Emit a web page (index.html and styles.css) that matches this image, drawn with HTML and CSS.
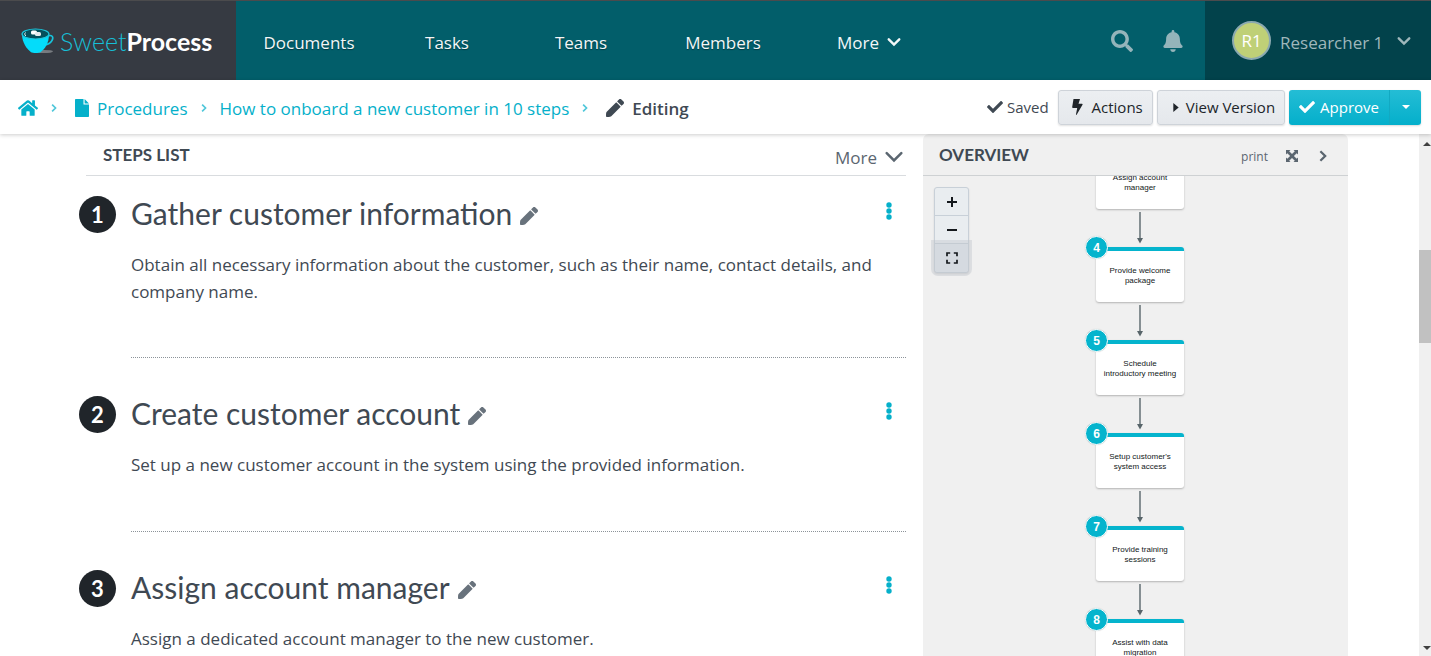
FILE: index.html
```html
<!DOCTYPE html>
<html lang="en">
<head>
<meta charset="utf-8">
<meta name="viewport" content="width=device-width, initial-scale=1">
<title>How to onboard a new customer in 10 steps - SweetProcess</title>
<link rel="stylesheet" href="styles.css">
</head>
<body>
<svg class="sprite" aria-hidden="true">
  <symbol id="pencil" viewBox="0 0 512 512"><path d="M497.9 142.1l-46.1 46.1c-4.7 4.7-12.3 4.7-17 0l-111-111c-4.7-4.7-4.7-12.3 0-17l46.1-46.1c18.7-18.7 49.1-18.7 67.9 0l60.1 60.1c18.8 18.7 18.8 49.1 0 67.9zM284.2 99.8L21.6 362.4C6 378 .4 400 .4 483.9c-2.900 16.400 11.400 30.600 27.800 27.800 84 0 106-5 121.500-21.300l262.600-262.600c4.700-4.700 4.700-12.300 0-17l-111-111c-4.800-4.700-12.400-4.700-17.100 0z"/></symbol>
  <symbol id="check" viewBox="0 0 512 512"><path d="M173.898 439.404l-166.400-166.400c-9.997-9.997-9.997-26.206 0-36.204l36.203-36.204c9.997-9.998 26.207-9.998 36.204 0L192 312.690 432.095 72.596c9.997-9.997 26.207-9.997 36.204 0l36.203 36.204c9.997 9.997 9.997 26.206 0 36.204l-294.400 294.401c-9.998 9.997-26.207 9.997-36.204-.001z"/></symbol>
  <symbol id="down" viewBox="0 0 16 16"><path d="M2 5 8 11 14 5" fill="none" stroke="currentColor" stroke-width="2.800" stroke-linecap="round"/></symbol>
  <symbol id="chevron" viewBox="0 0 16 16"><path d="M1.500 4.500 8 11 14.500 4.500" fill="none" stroke="currentColor" stroke-width="2.200" stroke-linecap="round"/></symbol>
  <symbol id="right" viewBox="0 0 16 16"><path d="M5 2.500 10.500 8 5 13.500" fill="none" stroke="currentColor" stroke-width="2.600"/></symbol>
  <symbol id="dots" viewBox="0 0 6 18"><circle cx="3" cy="3" r="2.700"/><circle cx="3" cy="9" r="2.700"/><circle cx="3" cy="15" r="2.700"/></symbol>
  <symbol id="arrow" viewBox="0 0 8 32"><path d="M4 0V28" stroke="currentColor" stroke-width="1.400"/><path d="M1 26H7L4 31.500Z"/></symbol>
</svg>

<header class="topbar">
  <a class="brand" href="#">
    <svg class="cup" viewBox="0 0 34 26" aria-hidden="true">
      <ellipse cx="23" cy="23.500" rx="9" ry="1.600" fill="#777b80"/>
      <path d="M26 8.500c5-2.500 7 .5 5 4-1.500 2.700-4.500 4-7.500 4.500" fill="none" stroke="#17c3dc" stroke-width="1.600"/>
      <path d="M1 6c0 9 5 15 9 18.200 1.500 1 8 1 9.500 0C24 21 28 15 28 6Z" fill="#04dcfa"/>
      <ellipse cx="14.500" cy="6" rx="13.500" ry="5" fill="#05505c" stroke="#20c6dc" stroke-width="1.200"/>
      <path d="M4.500 4.500c-1 1-1 2.500.5 3.500" fill="none" stroke="#fff" stroke-width="1"/>
      <rect x="10" y="2.500" width="6" height="4" rx="1.600" fill="#fff"/>
      <rect x="14" y="4" width="6" height="4" rx="1.600" fill="#e4eaec"/>
    </svg>
    <span class="wordmark"><span class="sweet">Sweet</span><strong>Process</strong></span>
  </a>
  <nav class="mainnav">
    <a href="#">Documents</a>
    <a href="#">Tasks</a>
    <a href="#">Teams</a>
    <a href="#">Members</a>
    <button type="button">More <svg class="i14"><use href="#down"/></svg></button>
  </nav>
  <div class="tools">
    <button type="button" aria-label="Search"><svg class="i22" viewBox="0 0 512 512"><path d="M505 442.700L405.300 343c-4.500-4.500-10.600-7-17-7H372c27.600-35.300 44-79.700 44-128C416 93.100 322.900 0 208 0S0 93.100 0 208s93.100 208 208 208c48.300 0 92.700-16.400 128-44v16.300c0 6.400 2.500 12.500 7 17l99.700 99.700c9.400 9.400 24.600 9.400 33.900 0l28.300-28.300c9.400-9.400 9.400-24.600.1-34zM208 336c-70.700 0-128-57.200-128-128 0-70.700 57.200-128 128-128 70.700 0 128 57.200 128 128 0 70.700-57.200 128-128 128z"/></svg></button>
    <button type="button" aria-label="Notifications"><svg class="i22" viewBox="0 0 448 512"><path d="M224 512c35.320 0 63.970-28.650 63.970-64H160.030c0 35.350 28.650 64 63.970 64zm215.390-149.710c-19.320-20.760-55.470-51.990-55.470-154.290 0-77.700-54.480-139.900-127.940-155.160V32c0-17.670-14.320-32-31.980-32s-31.980 14.330-31.980 32v20.840C118.560 68.100 64.080 130.300 64.080 208c0 102.300-36.150 133.530-55.470 154.290-6 6.450-8.660 14.160-8.610 21.710.11 16.400 12.980 32 32.100 32h383.800c19.120 0 32-15.600 32.100-32 .05-7.550-2.610-15.270-8.610-21.710z"/></svg></button>
  </div>
  <button class="user" type="button"><span class="avatar">R1</span><span class="username">Researcher 1</span><svg class="i14"><use href="#down"/></svg></button>
</header>

<div class="subbar">
  <nav class="crumbs" aria-label="Breadcrumb">
    <a href="#" aria-label="Home"><svg class="home" viewBox="0 0 576 512"><path d="M280.370 148.260L96 300.110V464a16 16 0 0 0 16 16l112.060-.29a16 16 0 0 0 15.920-16V368a16 16 0 0 1 16-16h64a16 16 0 0 1 16 16v95.640a16 16 0 0 0 16 16.050L464 480a16 16 0 0 0 16-16V300L295.670 148.260a12.190 12.190 0 0 0-15.300 0zM571.600 251.470L488 182.560V44.050a12 12 0 0 0-12-12h-56a12 12 0 0 0-12 12v72.610L318.470 43a48 48 0 0 0-61 0L4.340 251.470a12 12 0 0 0-1.600 16.900l25.500 31A12 12 0 0 0 45.150 301l235.220-193.740a12.190 12.190 0 0 1 15.300 0L530.900 301a12 12 0 0 0 16.900-1.600l25.500-31a12 12 0 0 0-1.700-16.930z"/></svg></a>
    <svg class="sep"><use href="#right"/></svg>
    <a class="crumb iconic" href="#"><svg class="file" viewBox="0 0 14 18"><path d="M0 1C0 .4.4 0 1 0H8.500V5.500H14V17c0 .6-.4 1-1 1H1c-.6 0-1-.4-1-1ZM9.600 0 14 4.400H9.600Z"/></svg>Procedures</a>
    <svg class="sep"><use href="#right"/></svg>
    <a class="crumb" href="#">How to onboard a new customer in 10 steps</a>
    <svg class="sep"><use href="#right"/></svg>
    <span class="crumb iconic current"><svg class="i18"><use href="#pencil"/></svg>Editing</span>
  </nav>
  <div class="actions">
    <span class="saved"><svg class="i16"><use href="#check"/></svg>Saved</span>
    <button class="btn" type="button"><svg class="bolt" viewBox="0 0 12 16"><path d="M2.500 0H9L7.500 4.800H11c.6 0 .8.500.5 1L5.800 15.600c-.3.500-.9.300-.8-.3L6.200 9H2c-.6 0-.9-.4-.8-1Z"/></svg>Actions</button>
    <button class="btn view" type="button"><svg class="play" viewBox="0 0 6 10"><path d="M0 0 6 5 0 10Z"/></svg>View Version</button>
    <div class="split">
      <button class="approve" type="button"><svg class="i16"><use href="#check"/></svg>Approve</button>
      <button class="caret" type="button" aria-label="More approval options"><svg viewBox="0 0 8 4"><path d="M0 0H8L4 4Z"/></svg></button>
    </div>
  </div>
</div>

<div class="viewport">
  <main class="content">
    <section class="steps">
      <div class="steps-head"><h2>STEPS LIST</h2><button type="button">More <svg class="i18"><use href="#chevron"/></svg></button></div>
      <article class="step">
        <span class="num">1</span>
        <div class="step-body">
          <div class="step-title"><h3>Gather customer information</h3><button type="button" aria-label="Edit title"><svg class="i18"><use href="#pencil"/></svg></button><button class="menu" type="button" aria-label="Step menu"><svg class="dots"><use href="#dots"/></svg></button></div>
          <p>Obtain all necessary information about the customer, such as their name, contact details, and company name.</p>
        </div>
      </article>
      <article class="step">
        <span class="num">2</span>
        <div class="step-body">
          <div class="step-title"><h3>Create customer account</h3><button type="button" aria-label="Edit title"><svg class="i18"><use href="#pencil"/></svg></button><button class="menu" type="button" aria-label="Step menu"><svg class="dots"><use href="#dots"/></svg></button></div>
          <p>Set up a new customer account in the system using the provided information.</p>
        </div>
      </article>
      <article class="step">
        <span class="num">3</span>
        <div class="step-body">
          <div class="step-title"><h3>Assign account manager</h3><button type="button" aria-label="Edit title"><svg class="i18"><use href="#pencil"/></svg></button><button class="menu" type="button" aria-label="Step menu"><svg class="dots"><use href="#dots"/></svg></button></div>
          <p>Assign a dedicated account manager to the new customer.</p>
        </div>
      </article>
    </section>

    <aside class="overview">
      <div class="overview-head">
        <h2>OVERVIEW</h2>
        <a href="#">print</a>
        <button type="button" aria-label="Expand"><svg class="i12" viewBox="0 0 12 12"><path d="M0 0H4.500L3.200 1.300 6 4.100 8.800 1.300 7.500 0H12V4.500L10.700 3.200 7.900 6l2.800 2.800L12 7.500V12H7.500l1.300-1.300L6 7.900l-2.800 2.800L4.500 12H0V7.500l1.300 1.300L4.100 6 1.300 3.200 0 4.500Z"/></svg></button>
        <button type="button" aria-label="Collapse"><svg class="i14"><use href="#right"/></svg></button>
      </div>
      <div class="canvas">
        <div class="zoom">
          <button type="button" aria-label="Zoom in"><svg class="i12" viewBox="0 0 12 12"><path d="M6 1V11M1 6H11" stroke="currentColor" stroke-width="2"/></svg></button>
          <button type="button" aria-label="Zoom out"><svg class="i12" viewBox="0 0 12 12"><path d="M1 6H11" stroke="currentColor" stroke-width="2"/></svg></button>
          <button class="fit" type="button" aria-label="Fit to screen"><svg class="i12" viewBox="0 0 12 12"><path d="M1 4.200V1H4.200M7.800 1H11V4.200M11 7.800V11H7.800M4.200 11H1V7.800" fill="none" stroke="currentColor" stroke-width="1.700"/></svg></button>
        </div>
        <div class="flow">
          <div class="node">Assign account manager</div>
          <svg class="link"><use href="#arrow"/></svg>
          <div class="node"><span class="badge">4</span>Provide welcome package</div>
          <svg class="link"><use href="#arrow"/></svg>
          <div class="node"><span class="badge">5</span>Schedule introductory meeting</div>
          <svg class="link"><use href="#arrow"/></svg>
          <div class="node"><span class="badge">6</span>Setup customer's system access</div>
          <svg class="link"><use href="#arrow"/></svg>
          <div class="node"><span class="badge">7</span>Provide training sessions</div>
          <svg class="link"><use href="#arrow"/></svg>
          <div class="node"><span class="badge">8</span>Assist with data migration</div>
        </div>
      </div>
    </aside>
  </main>
  <div class="scrollbar" aria-hidden="true">
    <svg viewBox="0 0 8 4"><path d="M4 0 8 4H0Z"/></svg>
    <div class="track"><div class="thumb"></div></div>
    <svg viewBox="0 0 8 4"><path d="M0 0H8L4 4Z"/></svg>
  </div>
</div>
</body>
</html>
```

FILE: styles.css
```css
* { box-sizing: border-box; }

body {
  margin: 0;
  height: 100vh;
  display: flex;
  flex-direction: column;
  overflow: hidden;
  background: #fff;
  color: #3f4953;
  font-family: "Open Sans", "Noto Sans", sans-serif;
  font-size: 17px;
}

button {
  display: inline-flex;
  align-items: center;
  padding: 0;
  border: 0;
  background: none;
  color: inherit;
  font: inherit;
  cursor: pointer;
}

a { color: inherit; text-decoration: none; }
h2, h3, p { margin: 0; }
svg { display: block; flex: none; fill: currentColor; }

.sprite { position: absolute; width: 0; height: 0; }
.i12 { width: 12px; height: 12px; }
.i14 { width: 14px; height: 14px; }
.i16 { width: 16px; height: 16px; }
.i18 { width: 18px; height: 18px; }
.i22 { width: 22px; height: 22px; }

/* Top bar */
.topbar {
  flex: none;
  display: flex;
  height: 80px;
  border-top: 1px solid #4b4b4d;
  background: #025e6a;
  color: #f2f7f8;
}
.brand {
  width: 236px;
  flex: none;
  display: flex;
  align-items: center;
  gap: 5px;
  padding-left: 21px;
  background: #363a42;
}
.cup { width: 34px; height: 26px; }
.wordmark { font-family: Lato, sans-serif; font-size: 25px; color: #fff; }
.sweet { color: #17bfd6; font-weight: 300; }
.mainnav {
  flex: none;
  display: grid;
  grid-template-columns: 146px 130px 138px 146px 146px;
  align-items: center;
  justify-items: center;
  padding-top: 3px;
  text-shadow: 0 1px 1px rgba(0, 0, 0, .4);
}
.mainnav button { gap: 8px; }
.tools {
  flex: 1;
  display: flex;
  align-items: center;
  justify-content: flex-end;
  gap: 29px;
  padding-right: 21px;
  color: #94b4ba;
}
.user {
  width: 226px;
  flex: none;
  gap: 9px;
  padding: 0 20px 0 27px;
  background: #02424b;
  color: #9fb7bb;
}
.avatar {
  width: 39px;
  height: 39px;
  flex: none;
  display: grid;
  place-items: center;
  border: 2px solid #8ba9b0;
  border-radius: 50%;
  background: #bfd077;
  color: #fff;
}
.username { padding-top: 3px; white-space: nowrap; }
.user svg { margin-left: auto; }

/* Breadcrumb bar */
.subbar {
  position: relative;
  z-index: 2;
  flex: none;
  display: flex;
  align-items: center;
  justify-content: space-between;
  height: 54px;
  padding: 0 10px 0 18px;
  background: #fff;
  box-shadow: 0 1px 4px rgba(0, 0, 0, .2);
}
.crumbs { display: flex; align-items: center; gap: 11px; padding-top: 2px; color: #05b0ca; white-space: nowrap; }
.crumb { display: flex; align-items: center; gap: 8px; }
.iconic { margin-left: 5px; }
.current { color: #3f4953; font-weight: 600; }
.home { width: 20px; height: 18px; }
.file { width: 14px; height: 18px; }
.sep { width: 10px; height: 10px; opacity: .7; }
.actions { display: flex; align-items: center; gap: 4px; font-size: 15px; white-space: nowrap; }
.saved { display: flex; align-items: center; gap: 4px; margin-right: 5px; }
.btn {
  height: 35px;
  gap: 9px;
  padding: 0 9px 0 12px;
  border: 1px solid #ced3d9;
  border-radius: 3px;
  background: linear-gradient(#eceff2, #e5e8ec);
  box-shadow: 0 1px 2px rgba(0, 0, 0, .12);
  color: #20252a;
}
.view { gap: 7px; padding-left: 15px; }
.bolt { width: 12px; height: 16px; }
.play { width: 6px; height: 9px; }
.split {
  display: flex;
  height: 35px;
  border-radius: 3px;
  background: linear-gradient(#24bdd5, #04afcb);
  box-shadow: 0 1px 2px rgba(0, 0, 0, .15);
  color: #fff;
}
.approve { gap: 5px; padding: 0 10px; }
.caret { width: 32px; justify-content: center; border-left: 1px solid #12a9c2; }
.caret svg { width: 8px; height: 4px; }

/* Scrolling area */
.viewport { flex: 1; min-height: 0; display: flex; }
.content {
  flex: 1;
  min-width: 0;
  display: grid;
  grid-template-columns: minmax(0, 827fr) minmax(0, 425fr);
  gap: 17px;
  padding: 0 71px 0 79px;
  overflow: hidden;
}
.steps { min-height: 0; overflow: hidden; }
.steps-head {
  display: flex;
  align-items: center;
  justify-content: space-between;
  height: 42px;
  margin-left: 7px;
  padding: 0 3px 0 17px;
  border-bottom: 1px solid #d9dcdf;
}
h2 { font: 700 17px/24px Lato, sans-serif; }
.steps-head button { gap: 8px; padding-top: 5px; color: #5b6670; }
.step { display: flex; gap: 15px; padding-top: 13px; }
.step + .step { padding-top: 0; }
.step + .step .num { margin-top: 38px; }
.step + .step .step-body { padding: 31px 0 53px; }
.num {
  flex: none;
  display: grid;
  place-items: center;
  width: 37px;
  height: 37px;
  margin-top: 7px;
  border-radius: 50%;
  background: #20252a;
  color: #fff;
  font: 700 22px/1 Lato, sans-serif;
}
.step-body { flex: 1; min-width: 0; padding-bottom: 52px; border-bottom: 1px dotted #8c9399; }
.step-title { display: flex; align-items: center; gap: 8px; height: 48px; margin-bottom: 14px; color: #68727c; }
.step-title button { padding-top: 5px; }
h3 { font: 400 30px/48px Lato, sans-serif; color: #3f4953; }
.step-title .menu { margin-left: auto; padding: 0 14px 4px 0; color: #05b0ca; }
.dots { width: 6px; height: 18px; }
.step p { line-height: 27px; }

/* Overview */
.overview { min-height: 0; display: flex; flex-direction: column; overflow: hidden; border-radius: 6px 6px 0 0; background: #f0f0f0; }
.overview-head {
  flex: none;
  display: flex;
  align-items: center;
  gap: 18px;
  height: 42px;
  padding: 0 18px 0 16px;
  border-bottom: 1px solid #ced1d3;
  color: #5b6670;
}
.overview-head h2 { margin-right: auto; color: #3f4953; }
.overview-head a { font-size: 12px; }
.overview-head a, .overview-head button { padding-top: 3px; }
.canvas { position: relative; flex: 1; min-height: 0; overflow: hidden; }
.zoom {
  position: absolute;
  top: 11px;
  left: 11px;
  display: flex;
  flex-direction: column;
  width: 35px;
  border: 1px solid #c8d0d8;
  border-radius: 3px;
  background: #e9edf0;
  box-shadow: 0 1px 2px rgba(0, 0, 0, .12);
  color: #14181c;
}
.zoom button { height: 28px; justify-content: center; border-bottom: 1px solid #c8d0d8; }
.zoom .fit { border: 0; border-radius: 0 0 3px 3px; background: #d5dae0; box-shadow: 0 0 0 4px rgba(190, 195, 202, .4); }
.flow { display: flex; flex-direction: column; align-items: center; padding-left: 9px; margin-top: -22px; }
.node {
  position: relative;
  flex: none;
  display: flex;
  align-items: center;
  justify-content: center;
  width: 88px;
  height: 55px;
  padding: 0 6px 1px;
  border-top: 4px solid #05b4cd;
  border-radius: 3px;
  background: #fff;
  box-shadow: 0 1px 2px rgba(0, 0, 0, .25);
  color: #111820;
  font: 8px/10px "Liberation Sans", Arial, sans-serif;
  text-align: center;
}
.badge {
  position: absolute;
  top: -15px;
  left: -11px;
  display: grid;
  place-items: center;
  width: 23px;
  height: 23px;
  border: 1px solid #fff;
  border-radius: 50%;
  background: #05b4cd;
  box-shadow: 0 0 1px rgba(0, 0, 0, .2);
  color: #fff;
  font-size: 12px;
  font-weight: 700;
}
.link { width: 8px; height: 32px; margin: 3px 0; color: #58656a; }

/* Scrollbar */
.scrollbar {
  flex: none;
  display: flex;
  flex-direction: column;
  align-items: center;
  width: 12px;
  padding: 8px 0 6px;
  background: #f0f0f0;
  color: #404040;
}
.scrollbar > svg { width: 8px; height: 4px; margin-left: 4px; }
.track { flex: 1; width: 100%; padding-top: 104px; }
.thumb { height: 93px; background: #c1c1c1; }
```
